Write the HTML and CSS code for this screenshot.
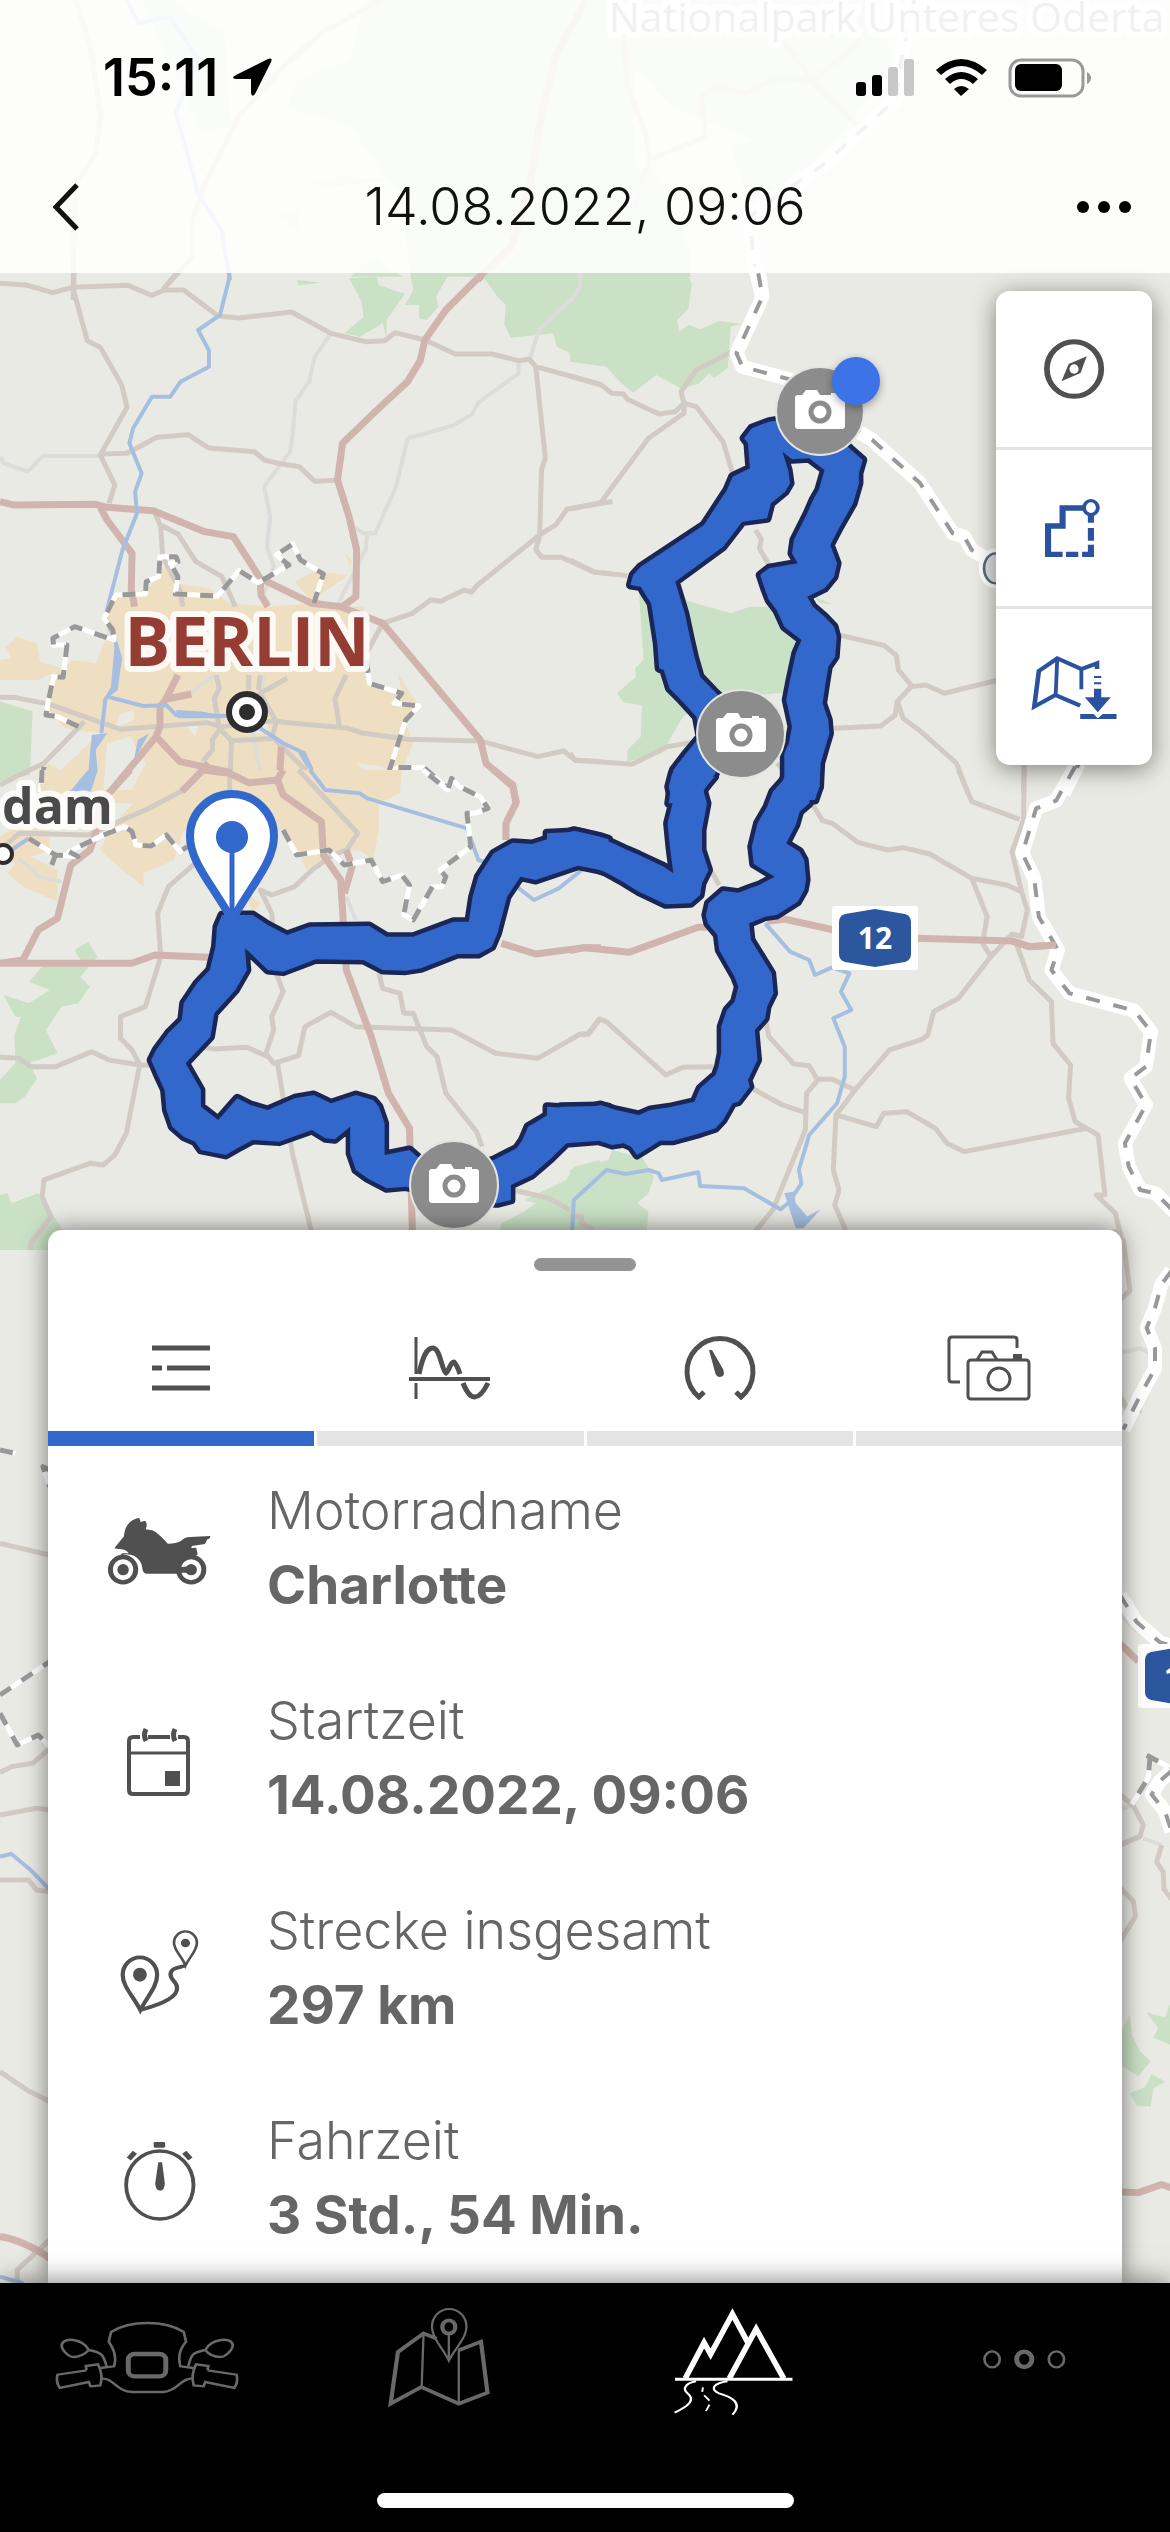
FILE: index.html
```html
<!DOCTYPE html>
<html lang="de">
<head>
<meta charset="utf-8">
<meta name="viewport" content="width=device-width, initial-scale=1">
<title>14.08.2022, 09:06</title>
<link rel="stylesheet" href="styles.css">
</head>
<body>
<div class="app">

<svg class="map" viewBox="0 0 1170 2532" preserveAspectRatio="xMidYMin slice" role="img" aria-label="Karte mit aufgezeichneter Route">
  <defs>
    <path id="band-north" transform="translate(570 270) scale(.3827 .3333)" d="M258 1600L270 1500L300 1455L340 1400L330 1340L290 1290L260 1255L245 1200L233 1195L228 1120L212 1000L195 970L185 950L158 945L165 915L185 890L350 765L410 660L425 620L470 595L465 520L455 505L475 475L520 455L600 440L700 500L735 540L765 570L755 610L755 640L740 700L705 770L680 825L698 880L690 920L665 955L620 980L635 1010L665 1040L690 1070L697 1100L693 1160L675 1190L668 1240L660 1300L675 1350L678 1390L665 1440L655 1480L652 1550L640 1590L540 1590L560 1520L560 1450L572 1420L580 1370L565 1290L575 1230L590 1150L605 1110L560 1070L540 1020L520 990L510 960L497 915L520 895L595 880L580 850L585 810L620 730L635 690L650 660L665 600L625 565L580 568L555 545L570 600L575 640L562 665L525 700L515 745L450 755L400 830L275 935L300 1030L315 1110L325 1160L340 1220L375 1262L400 1290L420 1400L380 1510L350 1560L345 1600Z"/>
    <path id="band-east" transform="translate(570 770) scale(.3827 .3333)" d="M652 -20L652 50L630 65L625 100L600 125L590 165L565 220L600 245L612 270L617 330L612 360L595 395L540 435L510 440L468 460L473 510L500 560L527 610L532 670L515 710L510 745L483 780L490 870L465 930L470 950L440 995L425 1000L400 1050L380 1075L340 1090L270 1112L235 1112L175 1155L160 1130L140 1120L110 1125L70 1110L0 1115L-60 1115L-60 1010L0 1015L30 1018L80 1005L120 1020L180 1035L210 1020L260 1012L325 995L340 955L380 915L388 890L395 850L395 770L410 720L430 695L440 650L430 620L390 540L385 495L360 460L355 435L362 400L400 362L440 368L470 355L495 345L535 320L480 282L475 230L490 160L515 110L530 65L565 20L565 -20Z"/>
    <path id="band-middle" transform="translate(570 770) scale(.3827 .3333)" d="M267 10L258 50L268 100L255 160L262 240L270 310L245 290L180 255L150 240L75 200L20 185L-60 190L-60 300L0 283L30 280L90 305L130 330L180 365L250 403L315 400L340 375L345 340L362 300L345 240L345 180L358 100L348 60L378 20Z"/>
    <path id="band-west" transform="translate(0 770) scale(.3827 .3333)" d="M1590 208L1568 200L1500 182L1390 222L1340 218L1290 250L1250 320L1235 380L1225 455L1185 455L1080 500L1010 500L965 468L810 470L750 495L700 465L660 435L580 435L567 470L563 530L548 600L515 640L480 700L475 750L440 790L408 840L395 870L410 910L430 960L435 1020L450 1070L480 1100L510 1115L525 1140L590 1155L620 1135L660 1110L730 1115L815 1080L850 1105L875 1108L915 1070L915 1150L930 1200L960 1225L1010 1255L1060 1250L1100 1260L1190 1300L1300 1300L1335 1290L1335 1245L1390 1215L1440 1165L1480 1120L1568 1112L1590 1118L1590 1012L1568 1008L1465 1010L1410 1050L1380 1070L1365 1110L1350 1135L1290 1170L1200 1200L1120 1190L1070 1140L1005 1155L1005 1060L990 1010L975 990L930 975L865 1000L820 975L770 985L700 1020L655 1005L620 985L570 1050L525 1010L525 960L485 880L550 800L560 730L615 660L645 600L640 535L655 550L700 600L740 605L825 568L950 570L1000 600L1060 602L1100 595L1195 552L1250 552L1285 530L1300 490L1325 380L1360 320L1400 330L1510 287L1568 300L1590 308Z"/>
    <g id="photo-pin">
      <circle r="44" fill="#8c8c8c" stroke="#e4e4e0" stroke-width="2"/>
      <path fill="#fff" d="M-22 -16H-18L-14 -21H-3L0 -16H11V-18H18V-16H22Q25 -16 25 -13V15Q25 18 22 18H-22Q-25 18 -25 15V-13Q-25 -16 -22 -16Z"/>
      <circle cy="1" r="9" fill="#fff" stroke="#8c8c8c" stroke-width="5"/>
    </g>
  </defs>

  <rect class="land" width="1170" height="2532"/>

  <!-- Brandenburg, north -->
  <g transform="scale(.7462 .3333)">
    <path class="forest" d="M490 0H1180L1195 200L1130 400L1070 560L1000 580L980 440L1010 420L900 320L850 200L850 500L880 520L925 760V830H550L540 600L470 380L385 320L400 240L470 180ZM190 0H230L300 100L310 380L270 390L240 250ZM470 830L500 770L540 830ZM410 550L460 530L530 540L440 560ZM370 650L400 630V690Z"/>
    <path class="road" d="M102 0L122 150L135 350L128 460L100 560L98 900M510 0L430 100L380 200L320 350L275 550L258 660V770L218 870M835 100L840 250L865 400L870 480L945 410L940 290L960 260L1000 280L1040 235L1085 240L1150 380M1040 100L1090 240L1150 130L1160 0M870 480L850 620"/>
    <path class="lane" d="M780 830L850 600L880 480"/>
    <path class="motorway" d="M785 0L745 170L725 350L710 560L685 740L640 840"/>
    <path class="river" d="M170 0L185 70L228 50L265 180L235 340L250 450L265 580L297 690L308 840"/>
    <path class="border-base" d="M1225 0L1210 150L1200 300L1150 400L1100 500L1040 590L1005 650L1010 780L1022 900"/>
    <path class="border-dash" d="M1225 0L1210 150L1200 300L1150 400L1100 500L1040 590L1005 650L1010 780L1022 900"/>
  </g>

  <!-- Berlin -->
  <g transform="translate(0 270) scale(.3827 .3333)">
    <path class="forest" d="M1250 0H1600V285L1492 275L1488 248L1455 230L1445 190L1335 203L1318 165L1322 105L1300 80ZM912 25L985 20L990 45L1058 72L1010 150V205L1000 160L940 200L900 190L950 140L945 95ZM1070 0H1178L1140 80L1145 110L1115 150L1095 145V105L1058 105L1080 60ZM775 30L840 38L780 46ZM0 1295L85 1325L78 1515L0 1535Z"/>
    <path class="urban" d="M300 970L385 960L430 890L460 940L545 955L600 1000L700 1010L820 1000L770 935L820 905L910 915L830 980L850 1010L950 1010L965 1230L1000 1260L1050 1270L1040 1210L1095 1310L1060 1360L1080 1420L1045 1510L1030 1560H880L800 1520L760 1600H60L120 1560V1480L160 1500L260 1390L170 1375L120 1310L130 1220L190 1170L250 1180L280 1100L275 1040ZM0 1170L30 1165L15 1130L45 1100L95 1120L105 1175L160 1195L100 1230H0ZM900 850L920 870L915 890Z"/>
    <path class="clearing" d="M315 1330L350 1320L350 1350L300 1375ZM280 1420L340 1400L380 1480L345 1560H270ZM930 1480L1000 1490L1030 1520L985 1530ZM480 1360L520 1370L510 1400ZM640 1330L700 1340L700 1390L650 1390Z"/>
    <path class="lane" d="M0 560L10 580L72 605L112 558H262M862 195L822 262L808 335L772 395L765 490L758 545L690 650L706 740L698 830L715 890L690 970M1515 0V65L1408 180L1385 265L1355 275V310L1250 398L1232 435L1180 468L1065 505L1035 650L980 790H950L918 765M960 790L955 840L880 1010M500 1270L560 1215M690 1215L660 1400L680 1500V1560"/>
    <path class="road" d="M0 40L68 45L138 68L190 52L335 46L396 76L430 60H480L570 138L625 144L762 126L865 190L955 215L1005 212L1032 188L1110 210L1190 252H1285L1355 272L1383 268L1400 290L1570 343M194 0L192 60L228 212L262 232L318 345L332 412L262 555L300 645L285 700M468 0L425 60M262 552L332 550L410 502L492 494L545 534L665 545L690 570L735 582L782 590L822 634L880 631M1400 290L1425 565L1415 600L1410 800L1400 838L1415 862H1467L1550 905L1600 912M1600 695L1482 717L1452 765L1410 795L1248 945L1232 967L1213 960L1152 994L1125 990L1078 1030L1000 1060L960 1145M400 715L420 770L425 860L470 960L478 1010M420 765L465 792L512 875L580 920L615 1010M0 1282L40 1283L130 1303L315 1378L540 1358L580 1370L720 1352L740 1357L905 1374L945 1389L1065 1408L1255 1413L1405 1460L1473 1443L1505 1472L1570 1475M220 1355L115 1480L50 1515L0 1545M565 1215L573 1255L560 1285L573 1375L605 1412L710 1406L722 1355L680 1270L750 1225M605 1412L600 1560M573 1380L555 1410V1440L530 1475M905 1215L875 1285L887 1370M715 1405L860 1570M650 1215V1260M680 1215L675 1260"/>
    <path class="motorway" d="M1270 0L1165 120L1110 210L1098 272L1065 335L985 420L895 520L882 630L912 740L932 840L930 980L895 1010M0 695L35 705L250 703L280 712L400 722L535 785L610 800L680 925L815 1000L890 1010L1000 1060L1255 1410L1270 1480L1340 1550L1350 1600M262 712L280 750L345 850L343 960L352 1010M680 930L682 975L700 1010M465 1215L432 1290L418 1310V1370L408 1400L285 1570M432 1288L500 1272M408 1400L470 1475L605 1508L650 1538L730 1530L735 1430M545 1480L475 1570M730 1530L735 1570"/>
    <path class="river" d="M597 0L600 20L575 135L518 180L546 242V290L472 335L445 380H397L348 475L338 520L370 610L353 665L358 730L320 840L275 1040L300 1110L314 1165L300 1250L275 1290L265 1390M280 1280L375 1308L435 1306L460 1335L600 1338M680 1375L740 1420L795 1450L830 1540L860 1570"/>
    <path class="lake" d="M300 1120L318 1165L308 1260L268 1295L290 1250ZM240 1395L280 1390L250 1440L255 1500L235 1570H175L230 1520L235 1450ZM360 1410L390 1390L350 1470ZM460 1320L525 1325L580 1335V1345H465ZM775 1440L800 1450L805 1500L790 1470Z"/>
    <path class="district" d="M205 1370L150 1340L120 1335L125 1300L140 1220L165 1222L175 1125H140L138 1105L195 1070L298 1110L295 1080L272 1045L303 975L380 972L382 935L415 920L418 860H460L465 875L445 880L465 920L458 972L568 978L625 902L675 938L755 885L722 855L765 822L785 870L845 912L820 1000M958 1170L965 1240L1050 1270L1030 1300L1095 1308L1060 1350L1015 1510L1040 1493H1108L1170 1555M115 1490L105 1570"/>
    <path class="district-dash" d="M205 1370L150 1340L120 1335L125 1300L140 1220L165 1222L175 1125H140L138 1105L195 1070L298 1110L295 1080L272 1045L303 975L380 972L382 935L415 920L418 860H460L465 875L445 880L465 920L458 972L568 978L625 902L675 938L755 885L722 855L765 822L785 870L845 912L820 1000M958 1170L965 1240L1050 1270L1030 1300L1095 1308L1060 1350L1015 1510L1040 1493H1108L1170 1555M115 1490L105 1570"/>
  </g>

  <!-- Oderbruch -->
  <g transform="translate(570 270) scale(.3827 .3333)">
    <path class="forest" d="M0 0H300L318 40L310 115L280 150L285 185L310 165L340 178L390 153L450 162L420 170L412 295L375 325L365 308L335 342L290 355L225 315L165 368L130 335L95 290L0 275ZM180 960L300 990L420 1030L470 1010L600 1010L580 1270H540L450 1280L330 1300L290 1350L240 1450L150 1475V1440L185 1400L188 1305L140 1298L123 1270L172 1220L170 1195L192 1170ZM640 980L685 1003L650 1000Z"/>
    <path class="lane" d="M26 0V50L0 98"/>
    <path class="road" d="M0 318L82 345L110 370L140 372L150 388L232 432L275 425L298 400L290 365L330 300L435 238M298 400V430L205 505L80 698L0 717M298 400L330 410L400 515L425 610M485 780L500 808L495 835L520 885M0 870L65 907L150 917M0 1450L12 1470L162 1483L255 1430L330 1415M695 1093L822 1127L853 1157L858 1200L893 1248L855 1295L850 1335L812 1368L690 1375M893 1250L930 1245L978 1270L1120 1230M858 1300L870 1345L912 1380L1010 1480L1040 1570M540 1480L560 1500M1187 1480L1185 1570"/>
    <path class="border-base" d="M492 -10L503 80L435 250L450 290L580 330L650 400L740 475L790 510L915 640L1000 790L1030 800L1050 840L1110 880M1330 1480L1290 1570"/>
    <path class="border-dash" d="M492 10L503 80L435 250L450 290L580 330L650 400L740 475L790 510L915 640L1000 790L1030 800L1050 840L1110 880M1330 1480L1290 1570"/>
    <ellipse cx="1112" cy="895" rx="36" ry="52" fill="#e9eae6" stroke="#fff" stroke-width="16"/>
    <ellipse cx="1112" cy="895" rx="30" ry="45" fill="#dfe0e0" stroke="#5b6880" stroke-width="7"/>
  </g>

  <!-- Potsdam and Teltow -->
  <g transform="translate(0 770) scale(.3827 .3333)">
    <path class="forest" d="M195 540L230 515L255 560L210 620L235 650L205 700L160 710L120 780L150 850L75 880L97 925L65 980L40 1000H0V930L40 880L38 795L55 740H40L10 675L75 700L130 660L75 635L110 590L165 590L215 580ZM0 1275L20 1270L30 1300L100 1270L165 1380V1440H0ZM1310 1360L1370 1325L1400 1300L1370 1290L1480 1230L1500 1190L1568 1170V1400H1300ZM0 0H40L0 20Z"/>
    <path class="urban" d="M400 0H1050L1045 70L990 100V180L975 270L940 240L870 250L800 300L780 240L740 180H480L455 270L375 310V350L330 310L260 240L300 160L380 60ZM100 0H220L160 60L110 90ZM0 200L40 170L130 180L130 240L80 260L150 300V395L60 350L20 310L40 280L0 260ZM640 360L680 400L660 430Z"/>
    <path class="road" d="M480 60L380 120L230 195L50 190L0 240M780 0L935 190L905 240L870 255L815 300L770 350L710 375L680 360L710 430L722 610L740 665L710 740L715 780L695 850L715 880L780 857L797 770L865 727L930 770L1180 780L1295 850L1405 865L1515 793H1535L1568 745M510 280L440 350L412 430L420 560L380 710L315 740V805L345 840L365 885L330 1090L300 1155L270 1185L235 1180L115 1230L110 1280L133 1340L80 1420V1440M0 862L50 865L80 890H145L240 845L285 870L365 885L400 885M515 830L560 837L645 832L700 860M725 880L765 1155L815 1390M990 610L1000 655L1045 670L1055 730H1080L1115 830L1142 860L1165 970L1245 1085L1260 1130M1340 1260L1435 1285L1520 1340L1570 1400M600 0V80"/>
    <path class="lane" d="M50 265L100 320L160 335M905 380L930 450"/>
    <path class="motorway" d="M340 0L260 100L250 190L235 240L185 285L150 445L100 480L60 570L0 580H345L405 555L545 562M530 0L475 65M530 0L600 10L650 38L725 30L740 75L840 155L845 255L890 330L905 600L970 800L1015 970L1070 1075L1078 1400M905 240L920 290L900 370M1290 0L1340 45L1348 100L1322 160V210M1310 520L1400 552L1525 533H1570M725 30L740 0"/>
    <path class="river" d="M810 0L850 60L940 70L960 85L1220 175L1250 270L1280 280M1350 350L1395 390L1460 355L1520 300M1568 1210L1500 1290L1495 1390M75 205L30 240"/>
    <path class="lake" d="M230 0H255L240 55H190Z"/>
    <path class="district" d="M75 205L145 255L205 260L180 245L260 200L325 170L345 185L355 225L395 228L435 195L470 245L490 230M740 180L775 255L860 240L900 285L970 270L1000 335L1050 315L1070 345L1055 435L1080 450L1130 350H1155L1165 320L1150 300L1230 230L1220 130H1240L1275 115L1255 80L1200 50L1180 25L1170 60L1105 0M110 0L108 40M145 255L135 285"/>
    <path class="district-dash" d="M75 205L145 255L205 260L180 245L260 200L325 170L345 185L355 225L395 228L435 195L470 245L490 230M740 180L775 255L860 240L900 285L970 270L1000 335L1050 315L1070 345L1055 435L1080 450L1130 350H1155L1165 320L1150 300L1230 230L1220 130H1240L1275 115L1255 80L1200 50L1180 25L1170 60L1105 0M110 0L108 40M145 255L135 285"/>
  </g>

  <!-- Spree and Frankfurt (Oder) -->
  <g transform="translate(570 770) scale(.3827 .3333)">
    <path class="forest" d="M0 1200L40 1190L100 1170L110 1140L190 1165L220 1220L205 1270L175 1300L205 1325L200 1400H0Z"/>
    <path class="road" d="M632 100L660 152L685 160L752 217L830 240L870 233L940 252L1050 325L1140 345L1180 365L1155 245L1185 150L1187 0M1015 0L1050 95L1175 148M1050 325L1090 440L1078 520L1100 560L1155 492L1180 500L1195 420L1180 365M1110 545L1015 685L950 725L935 795L920 808L835 840L745 960L695 1035L688 1200L703 1260L692 1305L720 1380M1165 515L1200 630L1258 695L1262 820L1308 885L1303 985L1320 1055L1380 1095L1398 1275H1375L1425 1330L1440 1400M1350 1075L1030 1145L985 1120L955 1075L880 1025L820 1030L800 1070L695 1035M745 960L685 928L650 927L618 970L615 1080L530 1320L480 1390M510 745L520 800L585 882L625 887L645 927M480 958L555 1005L620 1030M0 810L25 793H48L78 747L95 755L250 915L295 892L375 890M370 305L390 345M0 1340H30V1360L60 1380"/>
    <path class="motorway" d="M0 542L40 533L155 547L335 472H360M515 455L560 447L690 480M905 505L1155 513L1200 530L1270 525"/>
    <path class="river" d="M510 460L575 545L625 570L640 615L685 592L730 610L708 665L735 720L688 745L718 830V920L698 1000L625 1095L598 1200L605 1240L570 1300L550 1318L455 1255L340 1248L335 1207L240 1230L232 1210L205 1200L145 1212L95 1200L10 1290L5 1400"/>
    <path class="lake" d="M560 1270L585 1265L590 1300L620 1340L655 1318L610 1375H590Z"/>
    <path class="border-base" d="M1320 -10L1270 92L1218 115L1182 250L1213 325L1225 440L1275 540L1258 600L1305 670L1475 722L1518 785L1505 890L1465 925L1505 1005L1450 1120L1460 1190L1490 1260L1530 1270L1600 1350"/>
    <path class="border-dash" d="M1320 -10L1270 92L1218 115L1182 250L1213 325L1225 440L1275 540L1258 600L1305 670L1475 722L1518 785L1505 890L1465 925L1505 1005L1450 1120L1460 1190L1490 1260L1530 1270L1600 1350"/>
    <path class="motorway" d="M1155 513L1200 530L1270 525"/>
  </g>

  <!-- western edge -->
  <g transform="translate(0 1450) scale(.3827 .3333)">
    <path class="road" d="M0 280L130 315M0 968L30 950L85 940L130 895M0 1095L95 1075L130 1080M0 1290H75L95 1320L130 1325M0 1865L70 1920L130 1955M45 2510V2460L130 2370"/>
    <path class="motorway" d="M0 2360Q60 2370 130 2425"/>
    <path class="river" d="M0 1220L30 1212L80 1260L130 1320M0 2480L60 2500"/>
    <path class="district" d="M0 0L40 10M130 60L112 50L130 110M0 735L130 635M0 790L45 885L100 855L130 890"/>
    <path class="district-dash" d="M0 0L40 10M130 60L112 50L130 110M0 735L130 635M0 790L45 885L100 855L130 890"/>
  </g>

  <!-- eastern edge -->
  <g transform="translate(1090 1230) scale(.3333 .676)">
    <path class="forest" d="M90 1190L120 1160L125 1190L150 1215L182 1230L145 1252L90 1235ZM168 1157L225 1165L240 1145V1205L190 1195L205 1180ZM120 1277L165 1268L185 1248L225 1260L190 1270L182 1297L140 1295Z"/>
    <path class="lane" d="M90 182L150 175L205 187M90 858L130 850M160 900L215 910M90 570L140 592L200 600"/>
    <path class="road" d="M70 0L100 15L120 90L90 103M90 245L115 268L155 267M90 835L130 852L160 880L150 897L90 910M215 910L200 935L220 950L222 975L245 990M90 973L130 993L137 1015L90 1052"/>
    <path class="motorway" d="M90 612L145 638M90 1423L145 1424L215 1412L245 1417"/>
    <path class="border-base" d="M245 60L215 80L195 115L170 145L195 175L195 205L150 245L100 295M90 540L140 580L210 610L245 615M245 800L210 815L185 835L225 860L245 890"/>
    <path class="border-dash" d="M245 60L215 80L195 115L170 145L195 175L195 205L150 245L100 295M90 540L140 580L210 610L245 615M245 800L210 815L185 835L225 860L245 890"/>
    <path class="district" d="M170 777L240 795M180 780L175 810L125 850"/>
    <path class="district-dash" d="M170 777L240 795M180 780L175 810L125 850"/>
  </g>

  <!-- place names -->
  <text class="place park" x="609" y="32">Nationalpark Unteres Oderta</text>
  <text class="place capital" x="247" y="666" text-anchor="middle">BERLIN</text>
  <text class="place city" x="2" y="824">dam</text>
  <circle cx="247" cy="712" r="18" fill="#fff" stroke="#2d2d2d" stroke-width="6"/>
  <circle cx="247" cy="712" r="8" fill="#2d2d2d"/>
  <circle cx="3" cy="854" r="9" fill="#fff" stroke="#2d2d2d" stroke-width="4"/>

  <rect x="832" y="906" width="86" height="64" rx="3" fill="#fff"/>
  <path fill="#2c579e" d="M845 914L875 909L905 914Q911 916 911 922V954Q911 960 905 962L875 967L845 962Q839 960 839 954V922Q839 916 845 914Z"/>
  <text class="shield" x="875" y="949" text-anchor="middle">12</text>
  <rect x="1138" y="1644" width="86" height="64" rx="3" fill="#fff"/>
  <path fill="#2c579e" d="M1151 1652L1181 1647V1705L1151 1700Q1145 1698 1145 1692V1660Q1145 1654 1151 1652Z"/>
  <path fill="#fff" d="M1166 1671L1170 1668V1673L1167 1674Z"/>

  <!-- recorded trip -->
  <g class="route-edge">
    <use href="#band-north"/><use href="#band-east"/><use href="#band-middle"/><use href="#band-west"/>
  </g>
  <g class="route-fill">
    <use href="#band-north"/><use href="#band-east"/><use href="#band-middle"/><use href="#band-west"/>
  </g>
  <path fill="#fff" stroke="#3267cc" stroke-width="8" d="M232 920C212 884 190 862 190 836A42 42 0 0 1 274 836C274 862 252 884 232 920Z"/>
  <path stroke="#3267cc" stroke-width="5" d="M232 837V915"/>
  <circle cx="232" cy="837" r="16" fill="#3267cc"/>
  <use href="#photo-pin" x="820" y="411"/>
  <use href="#photo-pin" x="741" y="734"/>
  <use href="#photo-pin" x="454" y="1185"/>
  <circle class="position" cx="856" cy="381" r="24"/>
</svg>

<header class="top">
  <div class="status">
    <div class="clock">
      <span>15:11</span>
      <svg width="40" height="40" viewBox="0 0 40 40" aria-hidden="true"><path d="M36 1Q41 -1 39 4L23 36Q20 40 19 35V21H4Q-2 20 4 17Z"/></svg>
    </div>
    <svg width="238" height="40" viewBox="0 0 238 40" aria-hidden="true">
      <rect x="1" y="24" width="10" height="14" rx="3"/><rect x="17" y="17" width="10" height="21" rx="3"/>
      <rect x="33" y="9" width="10" height="29" rx="3" fill="#c8c8c8"/><rect x="49" y="1" width="10" height="37" rx="3" fill="#c8c8c8"/>
      <path d="M106 38L99 31Q106 25 114 31ZM90 21Q106 7 123 21L118 26Q106 16 95 26ZM81 12Q106 -10 132 12L127 17Q106 -1 86 17Z"/>
      <rect x="155" y="2" width="73" height="36" rx="11" fill="none" stroke="#999" stroke-width="3"/>
      <rect x="160" y="6" width="47" height="27" rx="6"/><path fill="#999" d="M232 14Q236 16 236 20Q236 24 232 26Z"/>
    </svg>
  </div>
  <div class="titlebar">
    <button class="bar-button" type="button" aria-label="Zurück"><svg width="28" height="48" viewBox="0 0 28 48" aria-hidden="true"><path fill="none" stroke="#111" stroke-width="5" d="M25 2L4 24L25 46"/></svg></button>
    <h1>14.08.2022, 09:06</h1>
    <button class="bar-button" type="button" aria-label="Mehr"><svg width="56" height="12" viewBox="0 0 56 12" aria-hidden="true"><circle cx="7" cy="6" r="6"/><circle cx="28" cy="6" r="6"/><circle cx="49" cy="6" r="6"/></svg></button>
  </div>
</header>

<main class="content">
  <div class="stage">
    <div class="tools">
      <button type="button" aria-label="Kompass"><svg width="156" height="156" viewBox="0 0 156 156" aria-hidden="true"><g transform="scale(.3827 .3333) translate(-1113 -63)" fill="#505050"><ellipse cx="1317" cy="297" rx="71" ry="82" fill="none" stroke="#505050" stroke-width="15"/><path d="M1284 334L1303 282L1350 259L1334 309Z"/><ellipse cx="1317" cy="297" rx="12" ry="14" fill="#fff"/></g></svg></button>
      <button type="button" aria-label="Route anzeigen"><svg width="156" height="156" viewBox="0 0 156 156" aria-hidden="true"><g transform="scale(.3827 .3333) translate(-1113 -540)" fill="none" stroke="#2a52a0" stroke-width="16"><path d="M1344 714H1287V768H1249V853H1287M1296 853H1328M1338 853H1361V824M1361 812V774M1361 758V736"/><ellipse cx="1361" cy="713" rx="18" ry="21" stroke-width="10"/></g></svg></button>
      <button type="button" aria-label="Karte herunterladen"><svg width="156" height="156" viewBox="0 0 156 156" aria-hidden="true"><g transform="scale(.3827 .3333) translate(-1113 -1017)" fill="none" stroke="#2a52a0" stroke-width="12"><path d="M1333 1307L1268 1275L1213 1310L1225 1203L1273 1165L1336 1197L1377 1180V1197"/><path stroke-width="10" d="M1273 1165L1269 1275M1336 1197V1258"/><path stroke-width="6" d="M1369 1221H1388M1369 1240H1388"/><path fill="#2a52a0" stroke="none" d="M1369 1256H1388V1282H1413L1379 1327L1345 1282H1369ZM1333 1332H1368L1379 1345L1392 1332H1428V1347H1333Z"/></g></svg></button>
    </div>
  </div>

  <section class="sheet">
    <div class="grip"></div>
    <div class="tabs" role="tablist">
      <button class="tab" type="button" role="tab" aria-selected="true" aria-label="Details"><svg width="90" height="66" viewBox="0 0 90 66" aria-hidden="true"><path fill="none" stroke="#505050" stroke-width="5" d="M16 13H74M16 33H26M31 33H74M16 53H74"/></svg></button>
      <button class="tab" type="button" role="tab" aria-selected="false" aria-label="Höhenprofil"><svg width="90" height="66" viewBox="0 0 90 66" aria-hidden="true"><g fill="none" stroke="#505050" stroke-width="4"><path stroke-width="3" d="M11 2V39M11 48V64"/><path d="M4 44H85"/><path stroke-width="5" d="M14 39C18 20 22 13 28 13C35 13 37 36 41 38C44 36 46 26 49 27Q52 30 55 39M58 48Q69 76 83 48"/></g></svg></button>
      <button class="tab" type="button" role="tab" aria-selected="false" aria-label="Geschwindigkeit"><svg width="90" height="66" viewBox="0 0 90 66" aria-hidden="true"><path fill="none" stroke="#505050" stroke-width="5" d="M29 57L24 62A33 33 0 1 1 66 62L61 57"/><path fill="#505050" d="M34 15L37 15L48 34Q51 41 45 42Q41 42 40 37Z"/></svg></button>
      <button class="tab" type="button" role="tab" aria-selected="false" aria-label="Fotos"><svg width="90" height="66" viewBox="0 0 90 66" aria-hidden="true"><g fill="none" stroke="#505050" stroke-width="3"><path d="M16 47H8Q5 47 5 44V5Q5 2 8 2H70Q73 2 73 5V13"/><rect x="24" y="25" width="61" height="39" rx="3"/><path d="M33 25L38 17H48L53 25"/><path stroke-width="6" d="M69 22H78"/><circle cx="55" cy="44" r="11"/></g></svg></button>
    </div>
    <dl class="facts">
      <div class="fact">
        <svg width="104" height="104" viewBox="0 0 104 104" aria-hidden="true"><g transform="scale(.3827 .3333) translate(-278 -138)" fill="#505050"><path d="M297 295L318 265Q323 262 323 250Q328 212 362 203L366 216L378 212Q385 222 379 238L396 241Q408 245 437 281Q460 281 472 272Q480 262 495 261L548 258Q548 266 540 268L534 282L500 288L498 294L511 293L515 313L506 320Q468 325 463 358L468 371H380Q371 370 370 352Q367 330 350 318Q330 308 310 318L318 310H335Q328 297 308 297Z"/><g fill="none" stroke="#505050" stroke-width="13"><ellipse cx="320" cy="359" rx="33" ry="38"/><ellipse cx="498" cy="359" rx="33" ry="38"/></g><ellipse cx="320" cy="359" rx="15" ry="17"/><ellipse cx="498" cy="359" rx="15" ry="17"/><path d="M470 352L495 348V368H470Z"/></g></svg>
        <div><dt>Motorradname</dt><dd>Charlotte</dd></div>
      </div>
      <div class="fact">
        <svg width="104" height="104" viewBox="0 0 104 104" aria-hidden="true"><g fill="none" stroke="#505050" stroke-width="4"><path d="M33 31H26Q22 31 22 35V84Q22 88 26 88H77Q81 88 81 84V35Q81 31 77 31H71M41 31H63"/><path stroke-width="3" d="M22 47H81"/><path stroke-width="5" d="M39 23Q36 29 39 35M68 23Q65 29 68 35"/></g><rect x="58" y="65" width="15" height="15" fill="#505050"/></svg>
        <div><dt>Startzeit</dt><dd>14.08.2022, 09:06</dd></div>
      </div>
      <div class="fact">
        <svg width="104" height="104" viewBox="0 0 104 104" aria-hidden="true"><g transform="scale(.3827 .3333) translate(-280 -138)" fill="none" stroke="#505050" stroke-width="11"><path d="M367 420C350 380 321 350 321 315A45 53 0 0 1 411 315C411 350 385 380 367 420ZM367 420Q465 390 463 354C464 335 445 332 446 312C447 292 470 293 485 287"/><path stroke-width="7" d="M485 287C478 262 455 242 455 218A30 34 0 0 1 515 218C515 242 495 262 485 287Z"/><g fill="#505050" stroke="none"><ellipse cx="366" cy="314" rx="18" ry="21"/><ellipse cx="485" cy="219" rx="12" ry="13"/></g></g></svg>
        <div><dt>Strecke insgesamt</dt><dd>297 km</dd></div>
      </div>
      <div class="fact">
        <svg width="104" height="104" viewBox="0 0 104 104" aria-hidden="true"><g transform="scale(.3827 .3333) translate(-280 -768)" fill="#505050"><ellipse cx="418" cy="945" rx="88" ry="102" fill="none" stroke="#505050" stroke-width="10"/><rect x="402" y="816" width="30" height="17" rx="4"/><path stroke="#505050" stroke-width="14" d="M337 867L353 847M498 867L482 847"/><path d="M414 877H424L431 940Q431 961 419 962Q406 961 406 940Z"/></g></svg>
        <div><dt>Fahrzeit</dt><dd>3 Std., 54 Min.</dd></div>
      </div>
    </dl>
  </section>
</main>

<nav class="bottom">
  <div class="nav-items">
    <a href="#fahren" aria-label="Fahren"><svg width="200" height="112" viewBox="0 0 200 112" aria-hidden="true"><g transform="scale(.3827 .3333) translate(-120 -105)" fill="none" stroke="#696969" stroke-width="7"><path d="M262 294L298 289C305 260 298 240 284 215L290 186C340 150 430 150 480 186L486 215C468 240 465 260 471 289L505 294M265 326C295 322 305 366 345 366H425C460 366 475 322 502 326M278 288C270 255 268 248 232 240M492 288C500 255 500 248 536 240M232 240C215 205 165 200 161 225C160 240 180 262 193 261Q215 260 232 240M536 240C553 205 605 200 608 225C608 240 588 262 575 261Q550 260 536 240M226 300L224 288L256 283Q270 315 262 346L236 349L232 336L156 354Q145 335 150 314L226 301M542 300L544 288L512 283Q498 315 506 346L532 349L536 336L612 354Q623 335 618 314L542 301"/><rect x="335" y="252" width="98" height="67" rx="17" stroke-width="13"/></g></svg></a>
    <a href="#karte" aria-label="Karte"><svg width="200" height="112" viewBox="0 0 200 112" aria-hidden="true"><g transform="scale(.3827 .3333) translate(-885 -105)" fill="none" stroke="#696969" stroke-width="11"><path d="M1140 206L1106 190L1039 246L1020 401L1100 351L1198 401L1273 368L1256 215L1197 241"/><path stroke-width="6" d="M1106 190L1101 351M1198 241V401M1172 185V270M1172 272C1160 240 1128 205 1128 170A45 53 0 0 1 1218 170C1218 205 1185 240 1172 272Z"/><ellipse cx="1172" cy="171" rx="17" ry="20"/></g></svg></a>
    <a href="#touren" aria-label="Touren" aria-current="page"><svg width="200" height="112" viewBox="0 0 200 112" aria-hidden="true"><g transform="scale(.3827 .3333) translate(-160 -105)" fill="none" stroke="#fff" stroke-width="15"><path d="M302 325L351 218L368 253L425 132L465 217M417 325L487 177L559 325"/><path stroke-width="9" d="M275 328H582"/><path stroke-width="6" d="M330 334C300 340 295 358 307 369C330 390 310 408 274 428M412 334C375 340 365 358 390 370C420 380 455 398 425 434"/><path stroke-width="5" d="M348 352L346 366M351 376L365 392M365 404L356 423"/></g></svg></a>
    <a href="#mehr" aria-label="Mehr"><svg width="200" height="112" viewBox="0 0 200 112" aria-hidden="true"><g transform="scale(.3827 .3333) translate(-924 -105)" fill="none" stroke="#696969" stroke-width="7"><ellipse cx="1102" cy="268" rx="20" ry="24"/><ellipse cx="1186" cy="268" rx="20" ry="23" stroke-width="13"/><ellipse cx="1270" cy="268" rx="20" ry="24"/></g></svg></a>
  </div>
  <div class="home"></div>
</nav>
</div>
</body>
</html>
```
FILE: styles.css
```css
* { box-sizing: border-box; }

body {
  margin: 0;
  background: #e9eae3;
  font-family: Inter, "Liberation Sans", sans-serif;
}

button { border: 0; margin: 0; padding: 0; background: none; font: inherit; color: inherit; }
svg { display: block; }

.app {
  position: relative;
  display: flex;
  flex-direction: column;
  min-height: 100vh;
  overflow: hidden;
}

/* Map canvas, behind everything else */
.map { position: absolute; inset: 0; width: 100%; height: 100%; }
.map path { vector-effect: non-scaling-stroke; stroke-linejoin: round; }
.land, .clearing { fill: #e9eae3; }
.forest { fill: #cae1c6; }
.urban { fill: #eedfc3; }
.lake { fill: #a6bfe1; }
.road, .lane, .motorway, .river, .border-base, .border-dash, .district, .district-dash { fill: none; }
.road { stroke: #d2cbc4; stroke-width: 5; }
.lane { stroke: #dcdcdb; stroke-width: 4; }
.motorway { stroke: #d1b4ae; stroke-width: 7; }
.river { stroke: #a6bfe1; stroke-width: 4; }
.border-base { stroke: #fff; stroke-width: 14; }
.border-dash { stroke: #999; stroke-width: 4; stroke-dasharray: 14 14; }
.district { stroke: #fff; stroke-width: 5; }
.district-dash { stroke: #999; stroke-width: 5; stroke-dasharray: 13 13; }
.route-edge { fill: #1a2756; stroke: #1a2756; stroke-width: 9; }
.route-fill { fill: #3267cc; }
.position { fill: #3c74e8; filter: drop-shadow(0 3px 4px rgb(0 0 0 / 35%)); }

.place {
  font-family: "Open Sans", sans-serif;
  font-weight: 700;
  paint-order: stroke;
  stroke: rgb(255 255 255 / 85%);
  stroke-width: 12px;
  stroke-linejoin: round;
}
.park { font-size: 41px; font-weight: 400; fill: #888; }
.capital { font-size: 68px; fill: #963d33; }
.city { font-size: 50px; fill: #4a4a4a; }
.shield { font-family: "Open Sans", sans-serif; font-size: 30px; font-weight: 700; fill: #fff; }

/* Header */
.top { position: relative; background: rgb(255 255 255 / 88%); color: #111; }
.status {
  display: flex;
  align-items: center;
  justify-content: space-between;
  height: 141px;
  padding: 15px 77px 0 103px;
  color: #000;
}
.clock { display: flex; align-items: center; gap: 14px; font-size: 52px; font-weight: 600; line-height: 60px; }
.titlebar { display: flex; align-items: center; justify-content: space-between; height: 132px; padding: 0 38px; }
.titlebar h1 { margin: 0; font-size: 52px; font-weight: 300; line-height: 64px; }
.bar-button { display: flex; align-items: center; justify-content: center; width: 56px; height: 90px; }

/* Map tools */
.content { position: relative; display: flex; flex: 1; flex-direction: column; }
.stage { display: flex; flex: 1; align-items: flex-start; justify-content: flex-end; padding: 18px; }
.tools {
  display: flex;
  flex-direction: column;
  gap: 3px;
  overflow: hidden;
  border-radius: 14px;
  background: #e4e4e4;
  box-shadow: 0 4px 24px rgb(0 0 0 / 45%);
}
.tools button { background: #fff; }

/* Trip details */
.sheet {
  margin: 0 48px;
  padding-top: 28px;
  border-radius: 14px 14px 0 0;
  background: #fff;
  box-shadow: 0 0 24px rgb(0 0 0 / 50%);
}
.grip { width: 102px; height: 13px; margin: 0 auto 34px; border-radius: 7px; background: #949494; }
.tabs { display: grid; grid-template-columns: repeat(4, 1fr); gap: 3px; }
.tab { display: flex; align-items: center; justify-content: center; height: 141px; border-bottom: 15px solid #e4e4e4; }
.tab[aria-selected="true"] { border-color: #3267cc; }
.facts { display: grid; gap: 60px; margin: 0; padding: 27px 59px 30px; color: #666; font-size: 52px; line-height: 75px; }
.fact { display: flex; align-items: center; gap: 56px; }
.fact dt { font-weight: 300; }
.fact dd { margin: 0; font-size: 53px; font-weight: 700; }

/* Bottom navigation */
.bottom { position: relative; padding: 22px 0 24px; background: #000; box-shadow: 0 0 26px rgb(0 0 0 / 55%); }
.nav-items { display: grid; grid-template-columns: repeat(4, 1fr); justify-items: center; }
.home { width: 417px; height: 15px; margin: 76px auto 0; border-radius: 8px; background: #fff; }
```
